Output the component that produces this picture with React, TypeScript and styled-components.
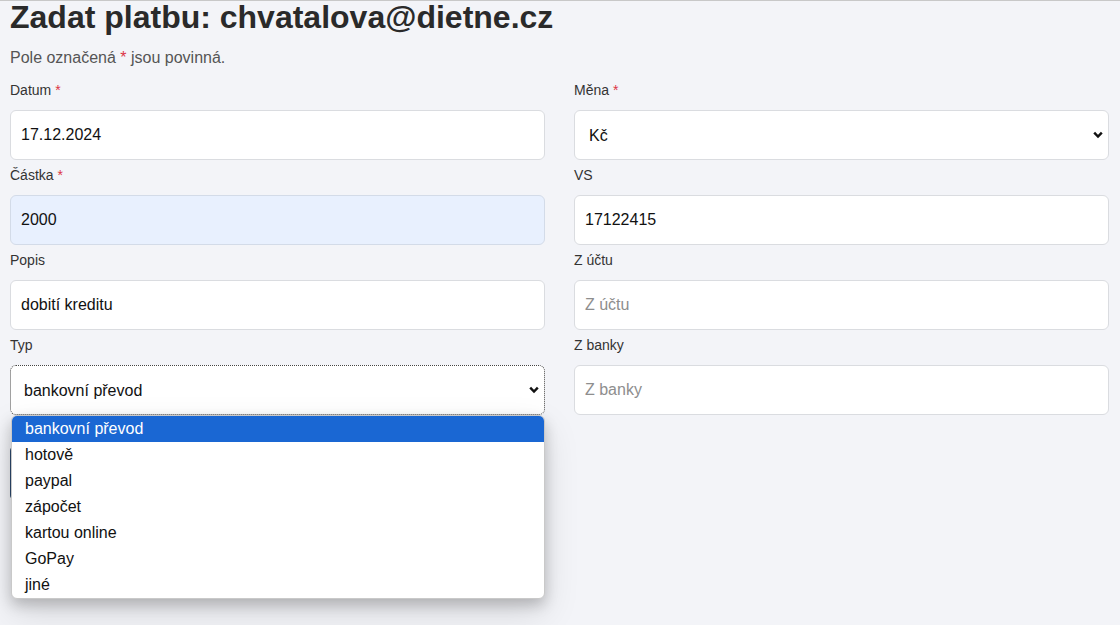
import React from "react";
import styled, { createGlobalStyle } from "styled-components";

const Global = createGlobalStyle`
  html, body { margin: 0; padding: 0; }
  body {
    background: #f3f4f8;
    border-top: 1px solid #c8c8c8;
    font-family: "Liberation Sans", Arial, sans-serif;
    color: #212529;
    height: 624px;
    overflow: hidden;
  }
`;

const Page = styled.div`
  padding: 0 11px 0 10px;
  position: relative;
`;

const Title = styled.h1`
  margin: 0;
  font-size: 32px;
  line-height: 32px;
  font-weight: 700;
  color: #2a2a2a;
`;

const Note = styled.p`
  margin: 15px 0 12px;
  font-size: 16px;
  line-height: 20px;
  color: #555;
`;

const Req = styled.span`
  color: #dc3545;
`;

const Grid = styled.div`
  display: grid;
  grid-template-columns: 1fr 1fr;
  column-gap: 29px;
  row-gap: 5px;
`;

const Field = styled.div`
  display: flex;
  flex-direction: column;
  position: relative;
`;

const Label = styled.label`
  font-size: 14px;
  line-height: 20px;
  color: #333;
  margin-bottom: 10px;
`;

const Input = styled.input<{ $autofill?: boolean }>`
  box-sizing: border-box;
  height: 50px;
  width: 100%;
  padding: 0 10px;
  font-family: "Liberation Sans", Arial, sans-serif;
  font-size: 16px;
  color: #111;
  border: 1px solid ${(p) => (p.$autofill ? "#d3dbe8" : "#dadce0")};
  border-radius: 6px;
  background: ${(p) => (p.$autofill ? "#e8f0fe" : "#fff")};
  outline: none;
  &::placeholder { color: #8e8e8e; }
`;

const SelectWrap = styled.div`
  position: relative;
`;

const Select = styled.select<{ $focused?: boolean; $pad: number }>`
  appearance: none;
  box-sizing: border-box;
  height: 50px;
  width: 100%;
  padding: 0 30px 0 ${(p) => p.$pad}px;
  font-family: "Liberation Sans", Arial, sans-serif;
  font-size: 16px;
  color: #111;
  background: #fff;
  border: 1px ${(p) => (p.$focused ? "dotted #444" : "solid #dadce0")};
  border-radius: 6px;
  outline: none;
  display: block;
`;

const Chevron = styled.svg`
  position: absolute;
  right: 6px;
  top: 21px;
  width: 10px;
  height: 8px;
  pointer-events: none;
`;

const SubmitButton = styled.button`
  display: block;
  margin-top: 30px;
  width: 90px;
  height: 56px;
  border: 1px solid #2c4a6e;
  border-radius: 6px;
  background: #3a5f8a;
`;

const ListBox = styled.ul`
  position: absolute;
  left: 1px;
  right: 0;
  top: 100%;
  margin: 0;
  padding: 0;
  list-style: none;
  background: #fff;
  border: 1px solid #c9c9c9;
  border-radius: 6px;
  overflow: hidden;
  box-shadow: 0 6px 14px rgba(0, 0, 0, 0.2), 0 14px 36px rgba(0, 0, 0, 0.12);
  z-index: 5;
`;

const Option = styled.li<{ $selected?: boolean }>`
  height: 26px;
  line-height: 26px;
  padding-left: 13px;
  font-size: 16px;
  color: ${(p) => (p.$selected ? "#fff" : "#111")};
  background: ${(p) => (p.$selected ? "#1a67d3" : "transparent")};
`;

const ChevronIcon = () => (
  <Chevron viewBox="0 0 10 8">
    <polyline points="1.2,1.6 5,5.6 8.8,1.6" fill="none" stroke="#111" strokeWidth="2.4" />
  </Chevron>
);

const options = ["bankovní převod", "hotově", "paypal", "zápočet", "kartou online", "GoPay", "jiné"];

export default function App() {
  return (
    <>
      <Global />
      <Page>
        <Title>Zadat platbu: chvatalova@dietne.cz</Title>
        <Note>
          Pole označená <Req>*</Req> jsou povinná.
        </Note>
        <Grid>
          <Field>
            <Label>
              Datum <Req>*</Req>
            </Label>
            <Input defaultValue="17.12.2024" />
          </Field>
          <Field>
            <Label>
              Měna <Req>*</Req>
            </Label>
            <SelectWrap>
              <Select $pad={14} defaultValue="Kč">
                <option>Kč</option>
              </Select>
              <ChevronIcon />
            </SelectWrap>
          </Field>
          <Field>
            <Label>
              Částka <Req>*</Req>
            </Label>
            <Input $autofill defaultValue="2000" />
          </Field>
          <Field>
            <Label>VS</Label>
            <Input defaultValue="17122415" />
          </Field>
          <Field>
            <Label>Popis</Label>
            <Input defaultValue="dobití kreditu" />
          </Field>
          <Field>
            <Label>Z účtu</Label>
            <Input placeholder="Z účtu" />
          </Field>
          <Field>
            <Label>Typ</Label>
            <SelectWrap>
              <Select $pad={13} $focused defaultValue="bankovní převod">
                {options.map((o) => (
                  <option key={o}>{o}</option>
                ))}
              </Select>
              <ChevronIcon />
              <ListBox>
                {options.map((o, i) => (
                  <Option key={o} $selected={i === 0}>
                    {o}
                  </Option>
                ))}
              </ListBox>
            </SelectWrap>
          </Field>
          <Field>
            <Label>Z banky</Label>
            <Input placeholder="Z banky" />
          </Field>
        </Grid>
        <SubmitButton aria-label="Uložit" />
      </Page>
    </>
  );
}
